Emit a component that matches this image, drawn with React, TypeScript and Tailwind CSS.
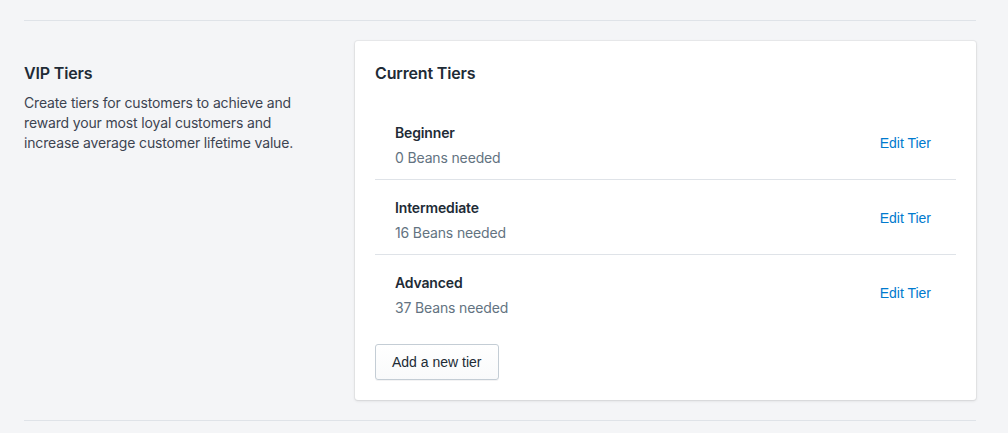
const tiers = [
  { name: "Beginner", beans: 0 },
  { name: "Intermediate", beans: 16 },
  { name: "Advanced", beans: 37 },
];

export default function App() {
  return (
    <main className="min-h-[433px] bg-[#f4f5f7] pt-5 pr-8 pl-6 font-['Inter','Noto_Sans',sans-serif] tracking-[-0.15px] text-[#212b36]">
      <section className="flex border-y border-[#dfe3e8] py-5">
        <div className="w-[331px] shrink-0 pt-5 pr-12">
          <h2 className="text-base leading-6 font-semibold">VIP Tiers</h2>
          <p className="mt-2 text-sm leading-5 text-[#3d4451]">
            Create tiers for customers to achieve and reward your most loyal customers and
            increase average customer lifetime value.
          </p>
        </div>

        <div className="flex-1 rounded-[3px] bg-white p-5 shadow-[0_0_0_1px_rgba(63,63,68,0.05),0_1px_3px_0_rgba(63,63,68,0.15)]">
          <h3 className="text-base leading-6 font-semibold">Current Tiers</h3>
          <ul className="mt-5">
            {tiers.map((tier, i) => (
              <li
                key={tier.name}
                className={
                  i < tiers.length - 1
                    ? "flex items-center justify-between border-b border-[#dfe3e8] pt-[18px] pr-[25px] pb-[11px] pl-5"
                    : "flex items-center justify-between pt-[18px] pr-[25px] pb-[11px] pl-5"
                }
              >
                <div>
                  <div className="text-sm leading-5 font-semibold">{tier.name}</div>
                  <div className="mt-[5px] text-sm leading-5 text-[#637381]">
                    {tier.beans} Beans needed
                  </div>
                </div>
                <a
                  href="#"
                  className="mb-[6px] font-['Liberation_Sans',Arial,sans-serif] text-sm tracking-normal text-[#007ace]"
                >
                  Edit Tier
                </a>
              </li>
            ))}
          </ul>
          <button className="mt-[15px] h-9 rounded-[3px] border border-[#c4cdd5] bg-gradient-to-b from-white to-[#f9fafb] px-4 font-['Liberation_Sans',Arial,sans-serif] text-sm tracking-normal text-[#212b36] shadow-[0_1px_0_0_rgba(22,29,37,0.05)]">
            Add a new tier
          </button>
        </div>
      </section>
    </main>
  );
}
